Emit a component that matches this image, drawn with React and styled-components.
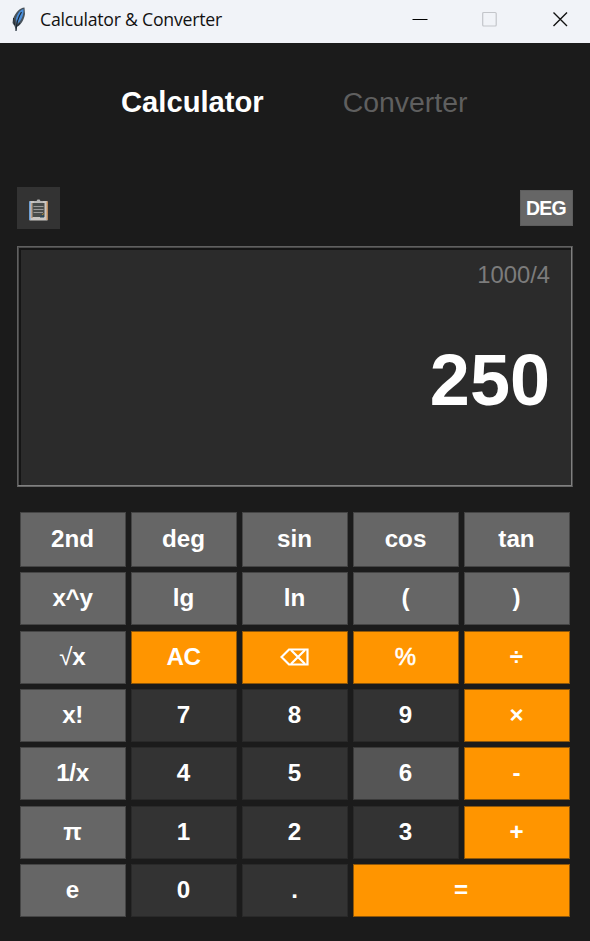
import React from "react";
import styled, { createGlobalStyle } from "styled-components";

const Global = createGlobalStyle`
  * { box-sizing: border-box; }
  body { margin: 0; background: #1b1b1b; }
`;

const Window = styled.main`
  width: 590px;
  height: 941px;
  display: flex;
  flex-direction: column;
  overflow: hidden;
  background: #1b1b1b;
  color: #fff;
  font-family: "Liberation Sans", Arial, sans-serif;
`;

const TitleBar = styled.header`
  height: 43px;
  display: flex;
  align-items: center;
  padding: 0 22px 5px 11px;
  background: #f1f3f8;
  color: #111;
`;

const Title = styled.h1`
  flex: 1;
  margin: 0 0 0 13px;
  font: 400 17.7px/24px "Open Sans", "Noto Sans", sans-serif;
  letter-spacing: ${(p) => p.$tracking}px;
  white-space: nowrap;
`;

const WindowControls = styled.div`
  display: flex;
  align-items: center;
  gap: 54px;
`;

const ControlIcon = styled.svg`
  display: block;
  width: 16px;
  height: 16px;
`;

const FeatherIcon = styled.svg`
  display: block;
  width: 16px;
  height: 26px;
`;

const Tabs = styled.nav`
  height: 144px;
  display: flex;
  gap: 79px;
  padding: 42px 0 0 121px;
`;

const Tab = styled.span`
  font-size: ${(p) => (p.$active ? 29.2 : 28.4)}px;
  line-height: 34px;
  font-weight: ${(p) => (p.$active ? 700 : 400)};
  color: ${(p) => (p.$active ? "#fff" : "#5f5f5f")};
`;

const Toolbar = styled.div`
  height: 59px;
  display: flex;
  justify-content: space-between;
  align-items: flex-start;
  padding: 0 17px;
`;

const HistoryButton = styled.button`
  display: flex;
  align-items: flex-start;
  width: 43px;
  height: 42px;
  margin: 0;
  padding: 12px 0 0 12px;
  border: 0;
  background: #333;
`;

const ClipboardIcon = styled.svg`
  display: block;
  width: 19px;
  height: 22px;
`;

const AngleMode = styled.button`
  width: 53px;
  height: 36px;
  margin-top: 3px;
  padding: 0 1px 0 0;
  border: 1px solid #5d5d5d;
  background: #666;
  color: #fff;
  font: 700 19.5px/34px "Liberation Sans", Arial, sans-serif;
  letter-spacing: -0.7px;
`;

const Display = styled.section`
  height: 241px;
  margin: 0 17px;
  padding: 14px 22px 0 0;
  border: 1px solid;
  border-color: #606060 #4c4c4c #666 #606060;
  box-shadow: inset -1px -1px 0 #808080, inset 1px 1px 0 #484848, inset 3px 3px 0 #151515;
  background: #2b2b2b;
  text-align: right;
`;

const Expression = styled.div`
  font-size: 23.8px;
  line-height: 27px;
  color: #7c7c7c;
`;

const Result = styled.div`
  margin-top: 50px;
  font-size: 72px;
  line-height: 84px;
  font-weight: 700;
`;

const Keypad = styled.div`
  display: grid;
  grid-template-columns: repeat(5, 106px);
  grid-template-rows: 54.5px repeat(6, 53px);
  gap: 5.4px 5px;
  margin: 25.4px 0 0 20px;
`;

const tones = {
  fn: ["#666", "#454545"],
  num: ["#333", "#292929"],
  hover: ["#555", "#3a3a3a"],
  op: ["#ff9500", "#8f5709"],
};

const Key = styled.button`
  grid-column: span ${(p) => p.$span || 1};
  display: flex;
  justify-content: center;
  align-items: center;
  margin: 0;
  padding: 0 1px 1px 0;
  border: 1px solid ${(p) => tones[p.$tone][1]};
  background: ${(p) => tones[p.$tone][0]};
  color: #fff;
  font: 700 24.2px/28px "Liberation Sans", Arial, sans-serif;
  letter-spacing: ${(p) => p.$tracking || 0}px;
`;

const LightGlyph = styled.span`
  font-weight: 400;
  font-size: 24px;
  -webkit-text-stroke: ${(p) => p.$stroke || 0}px #fff;
`;

const EraseIcon = styled.svg`
  display: block;
  width: 30px;
  height: 20px;
`;

const Erase = () => (
  <EraseIcon viewBox="0 0 30 20" fill="none" stroke="#fff" strokeWidth="2.2">
    <path d="M9 2.5H27.5V17.5H9L1.5 10Z" />
    <path d="M11 3L25 17M25 3L11 17" />
  </EraseIcon>
);

const keys = [
  { name: "2nd", tone: "fn" },
  { name: "deg", tone: "fn" },
  { name: "sin", tone: "fn" },
  { name: "cos", tone: "fn" },
  { name: "tan", tone: "fn" },
  { name: "x^y", tone: "fn", tracking: -0.3 },
  { name: "lg", tone: "fn" },
  { name: "ln", tone: "fn" },
  { name: "(", tone: "fn" },
  { name: ")", tone: "fn" },
  { name: "√x", tone: "fn", face: <><LightGlyph>√</LightGlyph>x</> },
  { name: "AC", tone: "op", tracking: -0.5 },
  { name: "Backspace", tone: "op", face: <Erase /> },
  { name: "%", tone: "op", face: <LightGlyph $stroke={0.5}>%</LightGlyph> },
  { name: "÷", tone: "op" },
  { name: "x!", tone: "fn", tracking: -0.5 },
  { name: "7", tone: "num" },
  { name: "8", tone: "num" },
  { name: "9", tone: "num" },
  { name: "×", tone: "op" },
  { name: "1/x", tone: "fn", tracking: -0.4 },
  { name: "4", tone: "num" },
  { name: "5", tone: "num" },
  { name: "6", tone: "hover" },
  { name: "-", tone: "op" },
  { name: "π", tone: "fn" },
  { name: "1", tone: "num" },
  { name: "2", tone: "num" },
  { name: "3", tone: "num" },
  { name: "+", tone: "op" },
  { name: "e", tone: "fn" },
  { name: "0", tone: "num" },
  { name: ".", tone: "num" },
  { name: "=", tone: "op", span: 2 },
];

export default function App() {
  return (
    <Window>
      <Global />
      <TitleBar>
        <FeatherIcon viewBox="0 0 16 26">
          <path d="M13.5 1.5C9 1.5 4 7 2 13L1.5 17L3.5 20L5 24.5L6 21C10 19 13 14 14 8Z" fill="#48525c" />
          <path d="M12.5 3C9 4 6 8 5 13L6 18C9 16 12 11 12.5 6Z" fill="#4a8fdd" />
          <path d="M10.5 6C8 10 5.5 15 5 25" fill="none" stroke="#1c2732" strokeWidth="1.2" />
          <path d="M2.5 12L3.5 19M9 17L6.5 20" fill="none" stroke="#20262c" strokeWidth="1" />
        </FeatherIcon>
        <Title $tracking={-0.25}>Calculator &amp; Converter</Title>
        <WindowControls>
          <ControlIcon viewBox="0 0 16 16"><path d="M0.5 8.5H15.5" stroke="#000" /></ControlIcon>
          <ControlIcon viewBox="0 0 16 16"><rect x="0.7" y="1.5" width="13.5" height="13.5" rx="1" fill="none" stroke="#c3c5ca" strokeWidth="1.2" /></ControlIcon>
          <ControlIcon viewBox="0 0 16 16"><path d="M1.5 1.5L15 15M15 1.5L1.5 15" stroke="#111" strokeWidth="1.4" /></ControlIcon>
        </WindowControls>
      </TitleBar>
      <Tabs>
        <Tab $active>Calculator</Tab>
        <Tab>Converter</Tab>
      </Tabs>
      <Toolbar>
        <HistoryButton aria-label="History">
          <ClipboardIcon viewBox="0 0 19 22">
            <path d="M0.5 2H18.5V21.5H0.5Z" fill="#c9c6c3" />
            <path d="M0.8 2.5V21" stroke="#69a5e4" strokeWidth="1.3" />
            <path d="M18.2 2.5V21" stroke="#c78d55" strokeWidth="1.3" />
            <path d="M3 4V19" stroke="#b17a4b" />
            <path d="M3.5 4H15.5V18H3.5Z" fill="#484c4b" />
            <path d="M4.5 7.5H14.5M4.5 10.5H14.5M4.5 13.5H14" stroke="#999" strokeWidth="1.2" />
            <path d="M11 17.5L15 14.5V18.5H11Z" fill="#29485b" />
            <path d="M13 16L15 14.5" stroke="#b58b32" />
            <path d="M5 3.8V2H7.5L8.5 0.5H10.5L11.5 2H14V3.8Z" fill="#b5b5b5" />
          </ClipboardIcon>
        </HistoryButton>
        <AngleMode>DEG</AngleMode>
      </Toolbar>
      <Display>
        <Expression>1000/4</Expression>
        <Result>250</Result>
      </Display>
      <Keypad>
        {keys.map(({ name, tone, face, span, tracking }) => (
          <Key key={name} $tone={tone} $span={span} $tracking={tracking} aria-label={name}>
            {face || name}
          </Key>
        ))}
      </Keypad>
    </Window>
  );
}
